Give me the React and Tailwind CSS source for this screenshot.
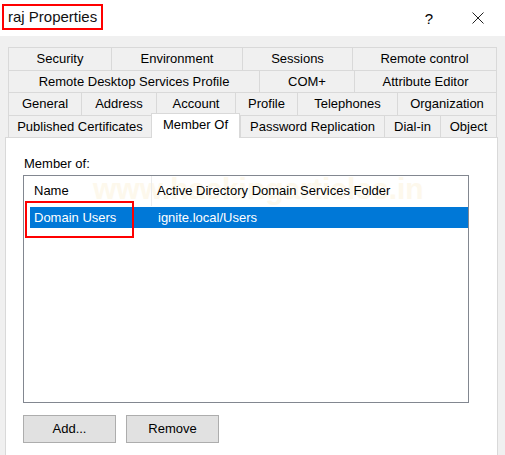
import React from "react";

// Rows of property-sheet tabs, widths in px
const tabRows = [
  [
    ["Security", "w-[103px]"],
    ["Environment", "w-[131px]"],
    ["Sessions", "w-[110px]"],
    ["Remote control", "w-[145px]"],
  ],
  [
    ["Remote Desktop Services Profile", "w-[251px]"],
    ["COM+", "w-[95px]"],
    ["Attribute Editor", "w-[143px]"],
  ],
  [
    ["General", "w-[73px]"],
    ["Address", "w-[75px]"],
    ["Account", "w-[79px]"],
    ["Profile", "w-[62px]"],
    ["Telephones", "w-[100px]"],
    ["Organization", "w-[100px]"],
  ],
];

const bottomRow = [
  ["Published Certificates", "w-[143px]"],
  ["Member Of", "w-[89px]", true],
  ["Password Replication", "w-[144px]"],
  ["Dial-in", "w-[56px]"],
  ["Object", "w-[57px]"],
];

const Tab = ({ label, width, last }) => (
  <div
    className={`${width} h-full flex items-center justify-center border-[#d9d9d9] border-l ${
      last ? "border-r" : ""
    } border-t`}
  >
    {label}
  </div>
);

const App = () => {
  return (
    <div className="w-[505px] h-[455px] overflow-hidden bg-[#f0f0f0] text-[13px] text-black font-['Liberation_Sans',Arial,sans-serif]">
      {/* title bar */}
      <div className="h-[36px] bg-white flex items-start">
        <div className="mt-[4px] ml-[2px] h-[26px] px-[4px] border-2 border-[#ff0000] flex items-center text-[15px] text-[#111]">
          raj Properties
        </div>
        <div className="ml-auto mt-[8px] w-[30px] text-center text-[15px] mr-[28px]">?</div>
        <div className="mt-[12px] mr-[21px]">
          <svg width="12" height="12" viewBox="0 0 12 12">
            <path d="M0.5 0.5 L11.5 11.5 M11.5 0.5 L0.5 11.5" stroke="#222" strokeWidth="1" />
          </svg>
        </div>
      </div>

      <div className="pt-[11px] pl-[5px]">
        {/* tab strip */}
        <div className="ml-[3px] w-[489px]">
          {tabRows.map((row, i) => (
            <div key={i} className={`flex ${i % 2 === 0 ? "h-[23px]" : "h-[22px]"}`}>
              {row.map(([label, w], j) => (
                <Tab key={label} label={label} width={w} last={j === row.length - 1} />
              ))}
            </div>
          ))}
          <div className="flex items-start h-[22px]">
            {bottomRow.map(([label, w, active], j) =>
              active ? (
                <div
                  key={label}
                  className={`${w} relative z-10 -mt-[2px] h-[25px] pb-[3px] bg-white border-l border-t border-r border-[#d9d9d9] flex items-center justify-center`}
                >
                  {label}
                </div>
              ) : (
                <Tab key={label} label={label} width={w} last={j === bottomRow.length - 1} />
              )
            )}
          </div>
        </div>

        {/* page body */}
        <div className="w-[493px] h-[330px] bg-white border border-[#d9d9d9] pt-[18px] pl-[17px]">
          <div className="pl-[1px] leading-[15px]">Member of:</div>

          <div className="relative mt-[4px] w-[446px] h-[228px] border border-[#828790] bg-white">
            {/* watermark, sits under the list text */}
            <div className="pointer-events-none absolute left-[69px] -top-[4px] text-[30px] font-bold leading-[34px] text-[#fdf8ec]">
              www.hackingarticles.in
            </div>

            <div className="relative flex h-[30px] items-center">
              <div className="w-[128px] h-full pl-[10px] flex items-center border-r border-[#ececec]">Name</div>
              <div className="pl-[5px]">Active Directory Domain Services Folder</div>
            </div>
            <div className="relative ml-[6px] mt-[1px] h-[21px] bg-[#0078d7] text-white flex items-center">
              <div className="w-[122px] pl-[4px]">Domain Users</div>
              <div className="pl-[6px]">ignite.local/Users</div>
            </div>

            {/* highlight box */}
            <div className="absolute left-[1px] top-[25px] w-[109px] h-[37px] border-2 border-[#ff0000]" />
          </div>

          <div className="flex gap-[10px] mt-[12px]">
            <button className="w-[93px] h-[28px] bg-[#e1e1e1] border border-[#adadad] text-[13px]">Add...</button>
            <button className="w-[93px] h-[28px] bg-[#e1e1e1] border border-[#adadad] text-[13px]">Remove</button>
          </div>
        </div>
      </div>
    </div>
  );
};

export default App;
